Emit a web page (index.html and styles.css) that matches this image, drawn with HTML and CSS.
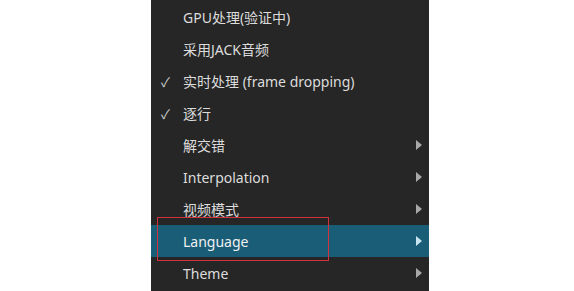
FILE: index.html
```html
<!DOCTYPE html>
<html>
<head>
  <title>Menu</title>
  <link rel="stylesheet" href="styles.css">
</head>
<body>
  <div class="menu">
    <div class="item"><span class="check"></span><span class="label">GPU处理(验证中)</span></div>
    <div class="item"><span class="check"></span><span class="label">采用JACK音频</span></div>
    <div class="item"><span class="check">✓</span><span class="label">实时处理 (frame dropping)</span></div>
    <div class="item"><span class="check">✓</span><span class="label">逐行</span></div>
    <div class="item"><span class="check"></span><span class="label">解交错</span><span class="arrow"></span></div>
    <div class="item"><span class="check"></span><span class="label">Interpolation</span><span class="arrow"></span></div>
    <div class="item"><span class="check"></span><span class="label">视频模式</span><span class="arrow"></span></div>
    <div class="item selected"><span class="check"></span><span class="label">Language</span><span class="arrow"></span><div class="mark"></div></div>
    <div class="item"><span class="check"></span><span class="label">Theme</span><span class="arrow"></span></div>
  </div>
</body>
</html>
```
FILE: styles.css
```css
body {
  margin: 0;
  background-color: #fff;
  font-family: "Noto Sans", "Noto Sans CJK SC", sans-serif;
  font-size: 14px;
  height: 291px;
  overflow: hidden;
}

.menu {
  margin-left: 151px;
  width: 278px;
  height: 291px;
  padding-top: 1px;
  box-sizing: border-box;
  background-color: #262626;
}

.item {
  position: relative;
  display: flex;
  align-items: center;
  height: 32px;
  color: #dcdcdc;
}

.item.selected {
  background-color: #195d77;
  color: #f0f0f0;
}

.check {
  width: 32px;
  padding-left: 10px;
  box-sizing: border-box;
  font-size: 13px;
  color: #cfcfcf;
}

.label {
  flex-grow: 1;
}

.arrow {
  width: 0;
  height: 0;
  margin-right: 7px;
  border-top: 5px solid transparent;
  border-bottom: 5px solid transparent;
  border-left: 6px solid #a8a8a8;
}

.selected .arrow {
  border-left-color: #c8e4f0;
}

.mark {
  position: absolute;
  left: 6px;
  top: -8px;
  width: 172px;
  height: 44px;
  box-sizing: border-box;
  border: 1px solid #d0333e;
}
```
